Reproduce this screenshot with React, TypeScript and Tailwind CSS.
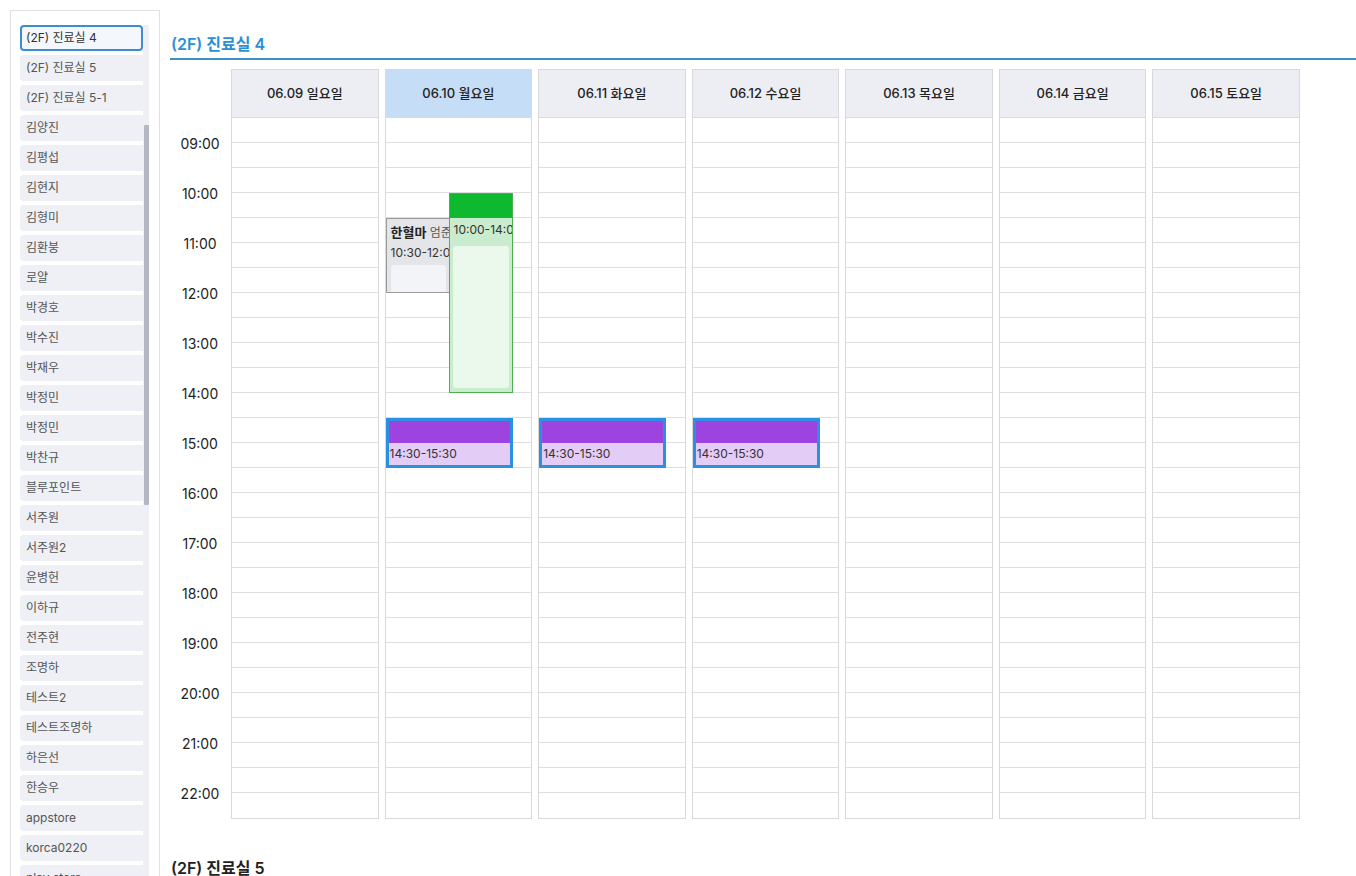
import React from "react";

const rooms = [
  "(2F) 진료실 4",
  "(2F) 진료실 5",
  "(2F) 진료실 5-1",
  "김양진",
  "김평섭",
  "김현지",
  "김형미",
  "김환붕",
  "로얄",
  "박경호",
  "박수진",
  "박재우",
  "박정민",
  "박정민",
  "박찬규",
  "블루포인트",
  "서주원",
  "서주원2",
  "윤병헌",
  "이하규",
  "전주현",
  "조명하",
  "테스트2",
  "테스트조명하",
  "하은선",
  "한승우",
  "appstore",
  "korca0220",
  "play store",
];

const days = [
  "06.09 일요일",
  "06.10 월요일",
  "06.11 화요일",
  "06.12 수요일",
  "06.13 목요일",
  "06.14 금요일",
  "06.15 토요일",
];

const hours = ["09:00", "10:00", "11:00", "12:00", "13:00", "14:00", "15:00", "16:00", "17:00", "18:00", "19:00", "20:00", "21:00", "22:00"];

// 08:30 start, 25px per 30 minutes
const toY = (t: string) => {
  const [h, m] = t.split(":").map(Number);
  return ((h * 60 + m - 510) * 25) / 30;
};

function PurpleEvent({ from, to }: { from: string; to: string }) {
  return (
    <div
      className="absolute left-0 w-[127px] border-[3px] border-[#2b8fe2] bg-[#e3ccf6] flex flex-col overflow-hidden"
      style={{ top: toY(from), height: toY(to) - toY(from) }}
    >
      <div className="h-[22px] bg-[#9c43e0] shrink-0" />
      <div className="pl-[1px] pt-[3px] text-[12px] leading-[16px] text-[#333]">
        {from}-{to}
      </div>
    </div>
  );
}

function DayColumn({ day, index }: { day: string; index: number }) {
  return (
    <div className="border border-[#d9d9d9] flex flex-col">
      <div
        className={`h-[48px] flex items-center justify-center text-[13px] font-medium text-[#222] border-b border-[#d9d9d9] ${
          index === 1 ? "bg-[#c6ddf8]" : "bg-[#eceef4]"
        }`}
      >
        {day}
      </div>
      <div className="relative">
        {Array.from({ length: 28 }).map((_, i) => (
          <div key={i} className={`h-[25px] ${i < 27 ? "border-b border-[#dedede]" : ""}`} />
        ))}

        {index === 1 && (
          <>
            <div
              className="absolute left-0 w-[64px] border border-[#9b9b9b] bg-[#e4e5e9] overflow-hidden whitespace-nowrap px-[4px] pt-[5px]"
              style={{ top: toY("10:30"), height: toY("12:00") - toY("10:30") }}
            >
              <div className="text-[12px] leading-[16px] text-[#555]">
                <span className="text-[13px] font-bold text-[#222]">한혈마</span> 엄준식
              </div>
              <div className="mt-[4px] text-[12px] leading-[16px] text-[#333]">10:30-12:00</div>
              <div className="mt-[4px] h-[28px] w-[55px] rounded-[3px] bg-[#f3f4f7]" />
            </div>
            <div
              className="absolute left-[63px] w-[64px] border border-[#4caf50] bg-[#c9ecce] overflow-hidden whitespace-nowrap flex flex-col"
              style={{ top: toY("10:00"), height: toY("14:00") - toY("10:00") }}
            >
              <div className="h-[24px] bg-[#0eb82f] shrink-0" />
              <div className="pl-[4px] pt-[4px] text-[12px] leading-[16px] text-[#333]">10:00-14:00</div>
              <div className="mx-[3px] mt-[8px] mb-[4px] flex-1 rounded-[3px] bg-[#ebf8ec]" />
            </div>
          </>
        )}
        {(index === 1 || index === 2 || index === 3) && <PurpleEvent from="14:30" to="15:30" />}
      </div>
    </div>
  );
}

export default function App() {
  return (
    <div
      className="h-[876px] overflow-hidden bg-white flex"
      style={{ fontFamily: 'Inter, "Noto Sans CJK KR", sans-serif' }}
    >
      <aside className="ml-[10px] mt-[10px] w-[150px] shrink-0 border border-[#e2e2e2] border-b-0 relative pl-[9px] pr-[10px] pt-[14px]">
        <div className="flex flex-col gap-[4px] relative">
          {rooms.map((r, i) => (
            <div
              key={i}
              className={`h-[26px] shrink-0 flex items-center text-[12px] rounded-[4px] ${
                i === 0
                  ? "w-[123px] border-2 border-[#3d8bd2] bg-[#f4f7fc] text-[#333] pl-[4px]"
                  : "w-[127px] bg-[#eef0f6] text-[#555] pl-[6px]"
              }`}
            >
              {r}
            </div>
          ))}
        </div>
        <div className="absolute right-[10px] top-[14px] bottom-0 w-[6px] bg-[#eef0f5]" />
        <div className="absolute right-[10px] top-[114px] h-[380px] w-[5px] bg-[#b3b7c2] rounded-[1px]" />
      </aside>

      <main className="flex-1 pl-[10px] pt-[34px]">
        <h2 className="text-[16px] leading-[20px] font-semibold text-[#2b8fd6] pb-[4px] border-b-2 border-[#3a8fc6] pl-[1px]">
          (2F) 진료실 4
        </h2>

        <div className="mt-[9px] flex items-start">
          <div className="w-[60px] shrink-0 pt-[61.5px]">
            {hours.map((h, i) => (
              <div key={h} className={i < hours.length - 1 ? "h-[50px]" : "h-[25px]"}>
                <div className="h-[25px] flex items-center justify-center text-[14px] text-[#222]">{h}</div>
              </div>
            ))}
          </div>
          <div className="grid grid-cols-7 gap-[6px] w-[1069px] ml-[1px]">
            {days.map((d, i) => (
              <DayColumn key={d} day={d} index={i} />
            ))}
          </div>
        </div>

        <h2 className="mt-[39px] text-[16px] leading-[20px] font-semibold text-[#222] pl-[1px]">(2F) 진료실 5</h2>
      </main>
    </div>
  );
}
